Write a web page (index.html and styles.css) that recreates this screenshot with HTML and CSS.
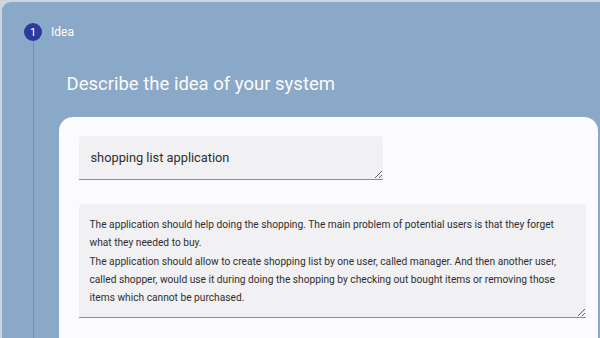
FILE: index.html
```html
<html>
<head>
    <link rel="stylesheet" href="styles.css">
</head>
<body>
<div class="stepper">
    <div class="step_head">
        <span class="step_num">1</span>
        <span class="step_label">Idea</span>
    </div>
    <div class="step_body">
        <h2 class="step_title">Describe the idea of your system</h2>
        <div class="card">
            <textarea class="field field_name" rows="1">shopping list application</textarea>
            <textarea class="field field_desc">The application should help doing the shopping. The main problem of potential users is that they forget what they needed to buy.
The application should allow to create shopping list by one user, called manager. And then another user, called shopper, would use it during doing the shopping by checking out bought items or removing those items which cannot be purchased.</textarea>
        </div>
    </div>
</div>
</body>
</html>
```

FILE: styles.css
```css
body {
    margin:0;
    background:#cdd6df;
    font-family:Roboto, "Noto Sans", sans-serif;
    overflow:hidden;
}

.stepper {
    margin:2px 0 0 2px;
    height:336px;
    box-sizing:border-box;
    overflow:hidden;
    background:#8aa8c7;
    border-radius:9px 0 0 0;
    padding:21px 0 0 22px;
}

.step_head {
    display:flex;
    align-items:center;
    gap:9px;
}

.step_num {
    width:18px;
    height:18px;
    border-radius:50%;
    background:#2c3a9c;
    color:#fff;
    font-size:11px;
    display:flex;
    align-items:center;
    justify-content:center;
}

.step_label {
    color:#fff;
    font-size:12px;
}

.step_body {
    margin-left:8.5px;
    border-left:1px solid #7490ad;
    padding:32px 0 0 33px;
    height:300px;
}

.step_title {
    margin:0 0 22px 0;
    font-weight:400;
    font-size:18.5px;
    color:#fbfbfd;
}

.card {
    margin-left:-8px;
    background:#fbfafc;
    border-radius:14px 14px 0 0;
    padding:19px 12px 20px 20px;
    display:flex;
    flex-direction:column;
    gap:24px;
    width:507px;
}

.field {
    display:block;
    border:0;
    border-bottom:1px solid #8d8d8f;
    border-radius:4px 4px 0 0;
    background:#f1f0f2;
    font-family:Roboto, "Noto Sans", sans-serif;
    color:#2f2f31;
    outline:0;
    box-sizing:border-box;
}

.field_name {
    width:304px;
    height:44px;
    padding:13px 12px;
    font-size:12.8px;
    line-height:18px;
}

.field_desc {
    width:507px;
    height:114px;
    padding:12px 24px 12px 11px;
    font-size:10.2px;
    line-height:18.3px;
}
```
